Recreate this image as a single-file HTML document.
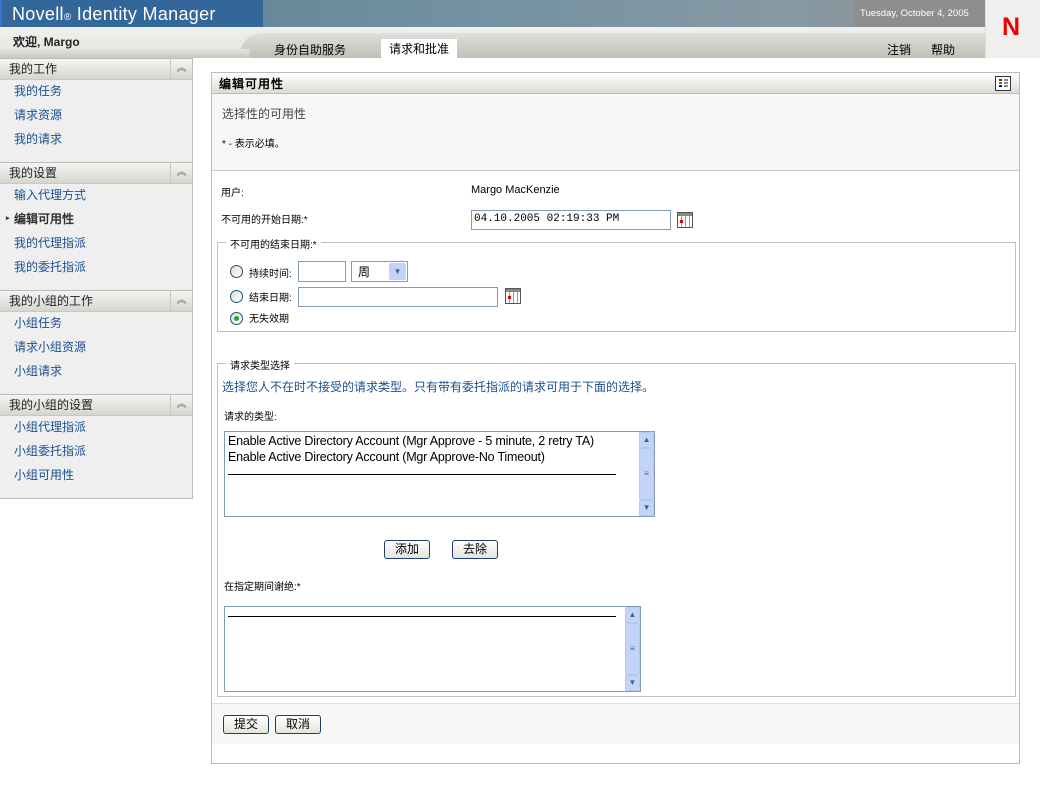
<!DOCTYPE html>
<html><head><meta charset="utf-8"><style>
*{box-sizing:border-box;margin:0;padding:0}
body{width:1040px;height:789px;background:#fff;position:relative;overflow:hidden;font-family:"Liberation Sans","Noto Sans CJK SC",sans-serif;font-size:12px;color:#000}
.a{position:absolute}
.cj{font-family:"Liberation Sans","WenQuanYi Zen Hei",sans-serif}
.side a{position:absolute;left:14px;color:#1a4f8f;text-decoration:none;font-size:12px;line-height:14px}
.sh{position:absolute;left:0;width:192px;height:22px;background:linear-gradient(#f4f4f2,#d6d6d0);border-top:1px solid #bbb;border-bottom:1px solid #c8c8c2;font-size:12px;line-height:20px;padding:0 0 0 9px;color:#222}
.sh i{position:absolute;right:0;top:0;width:22px;height:20px;border-left:1px solid #c8c8c2;font-style:normal;text-align:center;font-size:10px;color:#666;line-height:20px}
.inp{position:absolute;border:1px solid #7f9db9;background:#fff}
.btn{position:absolute;height:19px;border:1px solid #1c3f6e;border-radius:3px;background:linear-gradient(#fff,#e6e4dc);font-size:12px;text-align:center;line-height:17px}
.radio{position:absolute;width:13px;height:13px;border:1px solid #1c5180;border-radius:50%;background:linear-gradient(135deg,#dcdcd4,#fff)}
.sb{position:absolute;width:16px;background:#e8eefc;border-left:1px solid #fff}
.sb b{position:absolute;left:0;width:15px;height:16px;background:#c4d4f8;border:1px solid #b4c8f0;border-radius:2px;font-size:8px;color:#4d6185;text-align:center;line-height:14px;font-weight:normal}
.cal{position:absolute;width:16px;height:16px;border:1px solid #555;background:repeating-linear-gradient(90deg,#fff 0 3px,#999 3px 4px),#fff}
.cal:before{content:"";position:absolute;left:0;top:0;right:0;height:3px;background:#8a8a70}
.cal:after{content:"";position:absolute;left:2px;top:7px;width:3px;height:3px;background:#d00}
.fs{position:absolute;border:1px solid #c0c0c0}
.lg{position:absolute;background:#fff;padding:0 4px;font-size:11px}
</style></head><body>
<div class="a" style="left:0;top:0;width:985px;height:27px;background:linear-gradient(90deg,#5b7c8e,#6e8fa0 40%,#879aa4 80%,#8d8d8d)"></div>
<div class="a" style="left:0;top:0;width:263px;height:27px;background:#336699;border-left:2px solid #3a6ed0"></div>
<div class="a" style="left:12px;top:4px;color:#fff;font-size:18px;letter-spacing:0.3px">Novell<span style="font-size:10px">®</span> Identity Manager</div>
<div class="a" style="left:855px;top:0;width:130px;height:27px;background:#8e8e8e"></div>
<div class="a" style="left:860px;top:8px;color:#fff;font-size:9.5px">Tuesday, October 4, 2005</div>
<div class="a" style="left:985px;top:0;width:55px;height:58px;background:#efefed;border-left:1px solid #ddd"></div>
<div class="a" style="left:1002px;top:13px;color:#e00;font-size:25px;font-weight:bold">N</div>
<div class="a" style="left:0;top:27px;width:985px;height:31px;background:linear-gradient(#f0f0ee,#e4e4e0)"></div>
<div class="a" style="left:240px;top:33px;width:745px;height:25px;background:linear-gradient(#e0e0dc,#c0c0b8);border-radius:22px 0 0 0"></div>
<div class="a" style="left:0;top:49px;width:250px;height:9px;background:linear-gradient(#e4e4e0,#c8c8c0)"></div>
<div class="a cj" style="left:13px;top:33px;font-weight:bold;font-size:12px;color:#222">欢迎, Margo</div>
<div class="a cj" style="left:274px;top:41px;font-size:12px">身份自助服务</div>
<div class="a cj" style="left:381px;top:39px;width:76px;height:19px;background:#fff;padding:1px 0 0 8px;font-size:12px">请求和批准</div>
<div class="a cj" style="left:887px;top:41px;font-size:12px">注销</div>
<div class="a cj" style="left:931px;top:41px;font-size:12px">帮助</div>
<div class="a side cj" style="left:0;top:58px;width:193px;height:441px;background:#efefef;border-right:1px solid #bbb;border-bottom:1px solid #bbb">
<div class="sh" style="top:0">我的工作<i>︽</i></div>
<a style="top:26px">我的任务</a><a style="top:50px">请求资源</a><a style="top:74px">我的请求</a>
<div class="sh" style="top:104px">我的设置<i>︽</i></div>
<a style="top:130px">输入代理方式</a>
<a style="top:154px;color:#333;font-weight:bold"><span style="position:absolute;left:-8px;font-size:7px;top:0">▸</span>编辑可用性</a>
<a style="top:178px">我的代理指派</a><a style="top:202px">我的委托指派</a>
<div class="sh" style="top:232px">我的小组的工作<i>︽</i></div>
<a style="top:258px">小组任务</a><a style="top:282px">请求小组资源</a><a style="top:306px">小组请求</a>
<div class="sh" style="top:336px">我的小组的设置<i>︽</i></div>
<a style="top:362px">小组代理指派</a><a style="top:386px">小组委托指派</a><a style="top:410px">小组可用性</a>
</div>
<div class="a" style="left:211px;top:72px;width:809px;height:692px;border:1px solid #bbb"></div>
<div class="a" style="left:212px;top:73px;width:807px;height:21px;background:linear-gradient(#fff,#dcdcd6);border-bottom:1px solid #bbb"></div>
<div class="a cj" style="left:219px;top:75px;font-weight:bold;font-size:12px;letter-spacing:1px">编辑可用性</div>
<div class="a" style="left:995px;top:76px;width:16px;height:15px;border:1px solid #333;background:#fff">
<div class="a" style="left:3px;top:2px;width:3px;height:2px;background:#d00"></div><div class="a" style="left:8px;top:2px;width:4px;height:2px;background:#888"></div>
<div class="a" style="left:3px;top:5px;width:3px;height:2px;background:#0a0"></div><div class="a" style="left:8px;top:5px;width:4px;height:2px;background:#888"></div>
<div class="a" style="left:3px;top:8px;width:3px;height:2px;background:#00d"></div><div class="a" style="left:8px;top:8px;width:4px;height:2px;background:#888"></div></div>
<div class="a" style="left:212px;top:94px;width:807px;height:77px;background:#f7f7f5;border-bottom:1px solid #c8c8c8"></div>
<div class="a cj" style="left:222px;top:105px;font-size:12px;color:#444">选择性的可用性</div>
<div class="a cj" style="left:222px;top:135px;font-size:10px">* - 表示必填。</div>
<div class="a cj" style="left:221px;top:184px;font-size:10px">用户:</div>
<div class="a" style="left:471px;top:184px;font-size:11px">Margo MacKenzie</div>
<div class="a cj" style="left:221px;top:211px;font-size:10px">不可用的开始日期:*</div>
<div class="inp" style="left:471px;top:210px;width:200px;height:20px;font-family:'Liberation Mono',monospace;font-size:11px;padding:2px 0 0 2px">04.10.2005 02:19:33 PM</div>
<div class="cal" style="left:677px;top:212px"></div>
<div class="fs" style="left:217px;top:242px;width:799px;height:90px"></div>
<div class="lg cj" style="left:226px;top:236px;font-size:10px">不可用的结束日期:*</div>
<div class="radio" style="left:230px;top:265px"></div>
<div class="a cj" style="left:249px;top:265px;font-size:10px">持续时间:</div>
<div class="inp" style="left:298px;top:261px;width:48px;height:21px"></div>
<div class="inp cj" style="left:351px;top:261px;width:57px;height:21px;padding:1px 0 0 6px;font-size:12px">周<div class="a" style="right:1px;top:1px;width:17px;height:17px;background:#c1d3fb;border-radius:2px;font-size:8px;text-align:center;line-height:17px;color:#4d6185">▼</div></div>
<div class="radio" style="left:230px;top:290px"></div>
<div class="a cj" style="left:249px;top:289px;font-size:10px">结束日期:</div>
<div class="inp" style="left:298px;top:287px;width:200px;height:20px"></div>
<div class="cal" style="left:505px;top:288px"></div>
<div class="radio" style="left:230px;top:312px"><div class="a" style="left:3px;top:3px;width:5px;height:5px;border-radius:50%;background:#2a2"></div></div>
<div class="a cj" style="left:249px;top:310px;font-size:10px">无失效期</div>
<div class="fs" style="left:217px;top:363px;width:799px;height:334px"></div>
<div class="lg cj" style="left:226px;top:357px;font-size:10px">请求类型选择</div>
<div class="a cj" style="left:222px;top:378px;font-size:12px;color:#1a4f8f">选择您人不在时不接受的请求类型。只有带有委托指派的请求可用于下面的选择。</div>
<div class="a cj" style="left:224px;top:408px;font-size:10px">请求的类型:</div>
<div class="inp" style="left:224px;top:431px;width:431px;height:86px;font-size:12.5px;padding:1px 0 0 3px;line-height:16px;letter-spacing:-0.2px">Enable Active Directory Account (Mgr Approve - 5 minute, 2 retry TA)<br>Enable Active Directory Account (Mgr Approve-No Timeout)
<div class="a" style="left:3px;top:42px;width:388px;height:1px;background:#000"></div>
<div class="sb" style="right:0;top:0;height:84px"><b style="top:0">▲</b><b style="top:16px;height:52px;line-height:50px">≡</b><b style="top:68px">▼</b></div></div>
<div class="btn cj" style="left:384px;top:540px;width:46px">添加</div>
<div class="btn cj" style="left:452px;top:540px;width:46px">去除</div>
<div class="a cj" style="left:224px;top:578px;font-size:10px">在指定期间谢绝:*</div>
<div class="inp" style="left:224px;top:606px;width:417px;height:86px">
<div class="a" style="left:3px;top:9px;width:388px;height:1px;background:#000"></div>
<div class="sb" style="right:0;top:0;height:84px"><b style="top:0">▲</b><b style="top:16px;height:52px;line-height:50px">≡</b><b style="top:68px">▼</b></div></div>
<div class="a" style="left:212px;top:703px;width:807px;height:41px;background:#f7f7f5;border-top:1px solid #ddd"></div>
<div class="btn cj" style="left:223px;top:715px;width:46px">提交</div>
<div class="btn cj" style="left:275px;top:715px;width:46px">取消</div>
</body></html>
